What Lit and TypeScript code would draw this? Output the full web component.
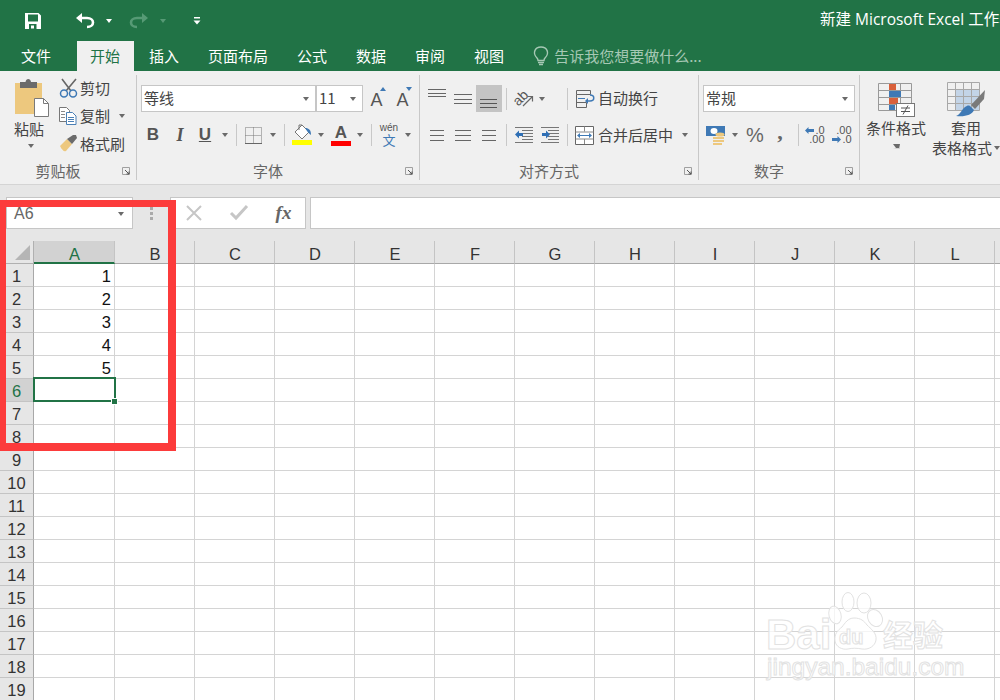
import { LitElement, html, css, svg } from "lit";
import { customElement } from "lit/decorators.js";

const ic = (x: number, y: number, w: number, h: number, c: unknown) =>
  html`<svg class="ic" viewBox="${x} ${y} ${w} ${h}" width=${w} height=${h}>${c}</svg>`;
const lines = (x1: number, x2: number, ys: number[], col = "#666") =>
  svg`${ys.map((y) => svg`<rect x=${x1} y=${y} width=${x2 - x1} height="1" fill=${col}></rect>`)}`;
const arr = html`<i class="arr"></i>`;
const sep = html`<i class="sep"></i>`;
const launcher = html`<span class="launch">${ic(0, 0, 8, 8, svg`<path d="M.5 .5h7v7h-7z" fill="none" stroke="#a0a0a0"/><path d="M3 3l4 4M7 4.5V7H4.5" fill="none" stroke="#555"/>`)}</span>`;
const decL = html`<svg class="da" viewBox="0 0 9 7" width="9" height="7"><path d="M0 3.500l3.500-3.500v2h5.500v3h-5.500v2z" fill="#3f79b5"></path></svg>`;
const decR = html`<svg class="da" viewBox="0 0 9 7" width="9" height="7"><path d="M9 3.500l-3.500-3.500v2h-5.500v3h5.500v2z" fill="#3f79b5"></path></svg>`;

const icons = {
  save: ic(25, 11, 16, 16, svg`<path fill-rule="evenodd" fill="#fff" d="M25 11h13.5l2.5 2.5V27H25zM28 12.5v7h10v-7zM29 22v5h7.500v-5z"/><rect x="31" y="23.500" width="3" height="3" fill="#fff"/>`),
  undo: ic(76, 11, 20, 17, svg`<path d="M79 17h9c8 0 8 9 0 9" fill="none" stroke="#fff" stroke-width="2.600"/><path d="M77 17l6-5v10z" fill="#fff"/>`),
  redo: ic(130, 11, 20, 17, svg`<path d="M147 17h-9c-8 0-8 9 0 9" fill="none" stroke="#569a75" stroke-width="2.600"/><path d="M149 17l-6-5v10z" fill="#569a75"/>`),
  cust: ic(193, 14, 8, 10, svg`<rect x="194" y="15" width="6" height="1.500" fill="#fff"/><path d="M193.500 18.500h7l-3.500 4z" fill="#fff"/>`),
  bulb: ic(533, 46, 16, 20, svg`<path d="M537 58c-5-5-2-11 4-11s9 6 4 11c-1 1-1 2-1 2.500h-6c0-.5 0-1.500-1-2.500z" fill="none" stroke="#a6c8b4" stroke-width="1.400"/><path d="M538 62.500h6M539 64.500h4" stroke="#a6c8b4" stroke-width="1.400"/>`),
  paste: ic(14, 78, 36, 40, svg`<rect x="15" y="83" width="27" height="31" fill="#edc87e"/><path d="M20 82h5.500c.5-4 5-4 5.500 0H37v6H20z" fill="#6b6b6b"/><path d="M34.500 98.500h9l5 5v13h-14z" fill="#fff" stroke="#7a7a7a"/><path d="M43.500 98.500v5h5" fill="none" stroke="#7a7a7a"/>`),
  cut: ic(57, 78, 20, 20, svg`<path d="M61 79l9 12M75 79l-10 12" stroke="#666" stroke-width="1.600" fill="none"/><circle cx="63" cy="93.500" r="3.500" fill="none" stroke="#3f79b5" stroke-width="1.500"/><circle cx="72" cy="93.500" r="3.500" fill="none" stroke="#3f79b5" stroke-width="1.500"/>`),
  copy: ic(57, 106, 20, 20, svg`<path d="M58.500 107.500h7l3 3v11h-10z" fill="#fff" stroke="#777"/><path d="M65.500 112.500h6l3.500 3.500v8.500h-9.500z" fill="#fff" stroke="#4a7fb5"/>${lines(60, 64, [111, 114, 117], "#888")}${lines(67, 73, [117, 119, 121], "#4a7fb5")}`),
  brush: ic(57, 134, 20, 20, svg`<path d="M59 146l7-7 5 5-6 7c-2 1-4-1-6-5z" fill="#edc87e"/><path d="M66 139l5 5 5-6-1-3h-3z" fill="#6b6b6b"/>`),
  border: ic(244, 125, 19, 19, svg`<path d="M245.500 126.500h16v16h-16zM245.500 134.500h16M253.500 126.500v16" fill="none" stroke="#777" stroke-dasharray="1 1"/><path d="M245 142.500h17" stroke="#666"/>`),
  fill: ic(291, 124, 22, 22, svg`<path d="M302 125l7 7-7 7-7-7z" fill="#fff" stroke="#777"/><path d="M299 130v-5h3" fill="none" stroke="#777"/><path d="M305 128c4 0 6 2 6 7-2-1-3-3-4-4z" fill="#3f79b5"/><rect x="292" y="140" width="20" height="5" fill="#ffff00"/>`),
  indentL: ic(514, 126, 20, 18, svg`${lines(522, 533, [130, 133, 136, 139], "#777")}${lines(515, 533, [127, 142], "#777")}<path d="M515 134.500l4-4v2.500h4v3h-4v2.500z" fill="#2f6fb5"/>`),
  indentR: ic(540, 126, 20, 18, svg`${lines(548, 559, [130, 133, 136, 139], "#777")}${lines(541, 559, [127, 142], "#777")}<path d="M550 134.500l-4-4v2.500h-4v3h4v2.500z" fill="#2f6fb5"/>`),
  orient: ic(514, 88, 22, 20, svg`<text x="516" y="102" transform="rotate(-45 522 100)" class="svgt">ab</text><path d="M524 105l9-9M528.500 95.500h5v5" fill="none" stroke="#666" stroke-width="1.200"/>`),
  wrap: ic(575, 88, 21, 20, svg`<path d="M576.500 89.500h14v4h-14zM576.500 93.500v13h10v-5h-10" fill="none" stroke="#666"/>${lines(578, 585, [97], "#3f79b5")}<path d="M590 94c5 0 5 6 0 6h-3" fill="none" stroke="#3f79b5" stroke-width="1.500"/><path d="M585 100l3-3v6z" fill="#3f79b5"/>`),
  merge: ic(574, 124, 21, 21, svg`<path d="M575.500 125.500h18v18h-18z" fill="#fff" stroke="#666"/><path d="M575.500 131h18M575.500 138h18M584.500 125.500v5M584.500 138v5" stroke="#888" fill="none"/><path d="M578 134.500h13" stroke="#3f79b5"/><path d="M577 134.500l3-2.500v5zM592 134.500l-3-2.500v5z" fill="#3f79b5"/>`),
  acct: ic(705, 125, 21, 21, svg`<rect x="706" y="126" width="19" height="10" fill="#3f79b5"/><ellipse cx="714" cy="131" rx="3.500" ry="3" fill="#fff"/><path d="M713 137h11v2h-11zM713 140h11v2h-11zM713 143h9v2h-9z" fill="#edc87e"/><ellipse cx="720" cy="134.500" rx="4.500" ry="2" fill="#edc87e"/>`),
  cond: ic(878, 82, 39, 36, svg`<path d="M879.500 83.500h33v27h-33zM890.500 83.500v27M901.500 83.500v27M879.500 90.500h33M879.500 97.500h33M879.500 104.500h33" fill="none" stroke="#999"/><rect x="890" y="84" width="7" height="6" fill="#d9603b"/><rect x="890" y="91" width="12" height="6" fill="#3f79b5"/><rect x="890" y="98" width="9" height="6" fill="#d9603b"/><rect x="890" y="105" width="6" height="5" fill="#3f79b5"/><rect x="897.500" y="103.500" width="18" height="13" fill="#fff" stroke="#777"/><path d="M902 108h9M902 111.500h9M909 105.500l-5 9" stroke="#555" fill="none"/>`),
  table: ic(948, 82, 40, 36, svg`<rect x="957" y="89" width="24" height="22" fill="#c3d4e7"/><path d="M949.500 82.500h32v28h-32zM957.500 82.500v28M965.500 82.500v28M973.500 82.500v28M949.500 89.500h32M949.500 96.500h32M949.500 103.500h32" fill="none" stroke="#a8a8a8"/><path d="M987 90l-14 15 4 4 9-10z" fill="#7a7a7a"/><path d="M972 106l4 4c-2 5-9 7-18 6 5-2 5-6 9-9 2-1 3-2 5-1z" fill="#3f79b5"/>`),
  x: ic(184, 205, 18, 16, svg`<path d="M186 206l14 14M200 206l-14 14" stroke="#c6c6c6" stroke-width="2" fill="none"/>`),
  check: ic(228, 205, 20, 16, svg`<path d="M230 213l5 5 11-12" stroke="#c6c6c6" stroke-width="3" fill="none"/>`),
  tri: ic(16, 245, 16, 16, svg`<path d="M31 245v15H16z" fill="#b5b5b5"/>`),
};

const rows = Array.from({ length: 19 }, (_, i) => i + 1);
const cols = "ABCDEFGHIJKLM".split("");

@customElement("app-root")
export class AppRoot extends LitElement {
  static styles = css`
    :host { display: block; width: 1000px; height: 700px; overflow: hidden; position: relative; background: #fff;
      font-family: "Noto Sans CJK SC", "Liberation Sans", sans-serif; font-size: 15px; color: #444; }
    .ic { display: block; overflow: visible; }
    .svgt { font: 14px "Liberation Sans", sans-serif; fill: #555; }
    i { display: block; font-style: normal; }
    .arr { width: 0; height: 0; border-left: 3.5px solid transparent; border-right: 3.5px solid transparent; border-top: 4px solid #6a6a6a; }
    .sep { width: 1px; height: 22px; background: #c8c8c8; }
    .cen { display: grid; grid-auto-flow: column; justify-content: start; align-items: center; justify-items: center; }

    .top { background: #217346; height: 71px; color: #fff; }
    .qat { height: 41px; grid-template-columns: 17px 32px 23px 26px 22px 38px 10px 19px 20px 613px 180px; white-space: nowrap; overflow: hidden; }
    .qat .arr { border-top-color: #fff; }
    .qat .arr.dim { border-top-color: #569a75; }
    .title { justify-self: start; font-family: "Open Sans", "Noto Sans CJK SC", sans-serif; font-size: 15.500px; line-height: 20px; margin-bottom: 4px; }
    .tabs { display: flex; height: 30px; line-height: 30px; padding-left: 21px; }
    .tab { padding: 0 14px 0 15px; }
    .tab.file { padding: 0 26px 0 0; }
    .tab.on { padding: 0 14px 0 13px; background: #f0f0f0; color: #217346; }
    .tell { display: flex; align-items: center; gap: 5px; margin-left: 15px; color: #a6c8b4; }

    .ribbon { display: flex; height: 114px; background: #f0f0f0; border-bottom: 1px solid #d4d4d4; box-sizing: border-box; overflow: hidden; }
    .group { box-sizing: border-box; height: 105px; margin-top: 4px; border-right: 1px solid #c8c8c8; display: flex; flex-direction: column; flex: none; }
    .g1 { width: 137px; } .g2 { width: 283px; } .g3 { width: 279px; } .g4 { width: 161px; }
    .g5 { width: 146px; border-right: 0; padding: 7px 0 0 6px; display: grid; grid-template-columns: 60px 80px; justify-items: center; align-content: start; }
    .body { flex: 1; min-height: 0; }
    .foot { height: 18px; display: flex; align-items: center; }
    .foot b { flex: 1; font-weight: 400; text-align: center; line-height: 18px; color: #666; }
    .launch { flex: none; width: 20px; display: grid; place-items: center; }

    .clip { display: grid; grid-template-columns: 58px 78px; }
    .pastecol { display: flex; flex-direction: column; padding: 3px 0 0 14px; }
    .pastecol span { line-height: 20px; margin-top: 1px; }
    .pastecol .arr { margin: 5px 0 0 14px; }
    .cliprows { display: grid; grid-auto-rows: 26px; row-gap: 2px; }
    .cliprow { display: flex; align-items: center; }
    .cliprow span { margin: -2px 0 0 2px; }
    .cliprow .arr { margin-left: 9px; }

    .r1 { height: 27px; margin-top: 10px; }
    .r2 { height: 26px; margin-top: 10px; }
    .box { height: 27px; box-sizing: border-box; background: #fff; border: 1px solid #c6c6c6; display: flex; align-items: center; justify-content: space-between; padding: 0 6px 0 2px; line-height: 24px; justify-self: stretch; }
    .box span { margin-top: -2px; }
    .fr1 { grid-template-columns: 3px 175px 47px 27px 25px; padding-left: 1px; }
    .fr2 { padding-left: 3px; grid-template-columns: 26px 28px 22px 18px 4px 30px 10px 12px 24px 14px 26px 12px 10px 26px 12px; }
    .fmt { font: 700 17px/20px "Liberation Sans", sans-serif; color: #555; }
    .fmt.it { font: italic 700 18px/20px "Liberation Serif", serif; }
    .fmt.un { text-decoration: underline; }
    .grow { position: relative; font: 18px/22px "Liberation Sans", sans-serif; color: #555; padding-top: 3px; }
    .grow::after { content: ""; position: absolute; right: -3px; top: 1px; border-left: 3px solid transparent; border-right: 3px solid transparent; }
    .grow.up::after { border-bottom: 4px solid #3f79b5; }
    .grow.dn::after { border-top: 4px solid #3f79b5; }
    .fcol { display: flex; flex-direction: column; align-items: center; width: 20px; font: 700 17px/17px "Liberation Sans", sans-serif; color: #555; }
    .fcol::after { content: ""; width: 20px; height: 5px; background: #ff0000; }
    .wen { display: flex; flex-direction: column; align-items: center; font: 10px/8px "Liberation Sans", sans-serif; color: #555; }
    .wen em { font: 13px/13px "Noto Sans CJK SC", sans-serif; color: #3f79b5; font-style: normal; margin-top: 1px; }

    .ar1 { padding-left: 4px; grid-template-columns: 26px 26px 26px 8px 28px 8px 16px 10px auto; margin-top: 10px; }
    .ar2 { padding-left: 4px; grid-template-columns: 26px 26px 26px 8px 28px 24px 10px auto; }
    .top-al { align-self: start; margin-top: 3px; }
    .activeb { width: 26px; height: 27px; background: #c4c4c4; display: flex; justify-content: center; align-items: flex-end; box-sizing: border-box; }
    .activeb .ic { margin-bottom: 4px; }
    .lbl { display: flex; align-items: center; padding-left: 3px; justify-self: start; white-space: nowrap; }
    .lbl span { margin: -2px 0 0 2px; }
    .lbl .arr { margin-left: 9px; }
    .lbl.mrg { padding-left: 2px; }
    .lbl.mrg span { margin-left: 3px; }

    .nr1 { padding-left: 4px; grid-template-columns: 152px; }
    .nr2 { padding-left: 4px; grid-template-columns: 24px 16px 24px 26px 10px 24px 30px; }
    .pct { font: 20px/22px "Liberation Sans", sans-serif; color: #666; }
    .comma { font: 700 22px/20px "Liberation Serif", serif; color: #666; margin-top: -6px; }
    .dec { display: flex; flex-direction: column; align-items: flex-end; font: 11px/9px "Liberation Sans", sans-serif; color: #555; white-space: nowrap; }
    .dec span { display: flex; align-items: center; gap: 1px; }
    .da { display: block; }

    .big { display: flex; flex-direction: column; align-items: center; white-space: nowrap; }
    .big span { line-height: 20px; }
    .big .arr.c { margin-top: 6px; }
    .big .l2 { display: flex; align-items: center; gap: 2px; }

    .fbar { height: 56px; background: #e6e6e6; padding-top: 12px; box-sizing: border-box; display: flex; align-items: flex-start; }
    .name { margin-left: 6px; width: 127px; height: 32px; box-sizing: border-box; background: #fff; border: 1px solid #c6c6c6; display: flex; align-items: center; justify-content: space-between; padding: 2px 8px 0 7px; font: 16px "Liberation Sans", sans-serif; color: #666; }
    .dots { width: 37px; height: 32px; display: flex; flex-direction: column; gap: 2px; align-items: center; justify-content: center; }
    .dots i { width: 3px; height: 3px; background: #aaa; }
    .ctl { width: 136px; height: 32px; box-sizing: border-box; background: #fff; border: 1px solid #c6c6c6; grid-template-columns: 45px 45px 45px; }
    .fx { font: italic 700 19px "Liberation Serif", serif; color: #666; }
    .input { margin-left: 4px; flex: 1; height: 32px; box-sizing: border-box; background: #fff; border: 1px solid #c6c6c6; border-right: 0; }

    .sheet { display: grid; grid-template-columns: 34px 81px repeat(12, 80px); grid-auto-rows: 23px; font: 16.500px/24px "Liberation Sans", sans-serif; }
    .corner, .ch, .rh { background: #e6e6e6; color: #333; display: flex; align-items: center; justify-content: center; box-sizing: border-box; }
    .corner { border-right: 1px solid #b0b0b0; border-bottom: 1px solid #b0b0b0; padding: 4px 2px 3px 16px; justify-content: flex-end; }
    .ch { border-right: 1px solid #c4c4c4; border-bottom: 1px solid #a8a8a8; padding: 4px 0 0 1px; }
    .ch.on { background: #d2d2d2; color: #217346; border-bottom: 2px solid #217346; }
    .rh { border-right: 1px solid #a8a8a8; border-bottom: 1px solid #c4c4c4; padding-top: 1px; }
    .rh.on { background: #d2d2d2; color: #217346; }
    .c { box-sizing: border-box; border-right: 1px solid #d4d4d4; border-bottom: 1px solid #d4d4d4; text-align: right; padding-right: 3px; color: #111; }
    .selwrap { position: relative; }
    .selbox { position: absolute; left: -1px; top: -2px; right: -2px; bottom: -1px; border: 2px solid #217346; z-index: 2; }
    .handle { position: absolute; right: -3px; bottom: -4px; width: 5px; height: 5px; background: #217346; outline: 1px solid #fff; }

    .redbox { position: absolute; left: 0; top: 200px; width: 176px; height: 251px; box-sizing: border-box; border: solid #fc3b3b; border-width: 7px 8px 8px 6px; z-index: 5; }

    .wm { position: absolute; left: 762px; top: 590px; width: 190px; height: 92px; z-index: 4; pointer-events: none; }
    .wm svg { position: absolute; left: 0; top: 0; overflow: visible; }
    .wm span { position: absolute; color: rgba(255,255,255,.75); -webkit-text-stroke: 1px #e2e2e2; white-space: nowrap; line-height: 1; }
    .wm .bai { left: 4px; top: 24px; font: 700 42px/1 "Liberation Sans", sans-serif; }
    .wm .du { left: 77px; top: 37px; font: 700 20px/1 "Liberation Sans", sans-serif; }
    .wm .jy { left: 121px; top: 28px; font: 700 30px/1 "Noto Sans CJK SC", sans-serif; }
    .wm .url { left: 5px; top: 65px; font: 24.500px/1 "Liberation Sans", sans-serif; }
  `;

  render() {
    return html`
      <div class="top">
        <div class="qat cen">
          <i></i>${icons.save}<i></i>${icons.undo}${arr}${icons.redo}<i class="arr dim"></i><i></i>${icons.cust}<i></i>
          <div class="title">新建 Microsoft Excel 工作表</div>
        </div>
        <div class="tabs">
          <div class="tab file">文件</div>
          <div class="tab on">开始</div>
          <div class="tab">插入</div>
          <div class="tab">页面布局</div>
          <div class="tab">公式</div>
          <div class="tab">数据</div>
          <div class="tab">审阅</div>
          <div class="tab">视图</div>
          <div class="tell">${icons.bulb}<span>告诉我您想要做什么...</span></div>
        </div>
      </div>

      <div class="ribbon">
        <section class="group g1">
          <div class="body clip">
            <div class="pastecol">${icons.paste}<span>粘贴</span>${arr}</div>
            <div class="cliprows">
              <div class="cliprow">${icons.cut}<span>剪切</span></div>
              <div class="cliprow">${icons.copy}<span>复制</span>${arr}</div>
              <div class="cliprow">${icons.brush}<span>格式刷</span></div>
            </div>
          </div>
          <div class="foot"><b>剪贴板</b>${launcher}</div>
        </section>

        <section class="group g2">
          <div class="body">
            <div class="cen r1 fr1">
              <i></i>
              <div class="box"><span>等线</span>${arr}</div>
              <div class="box"><span>11</span>${arr}</div>
              <div class="grow up">A</div>
              <div class="grow dn">A</div>
            </div>
            <div class="cen r2 fr2">
              <div class="fmt">B</div><div class="fmt it">I</div><div class="fmt un">U</div>${arr}${sep}
              ${icons.border}${arr}${sep}
              ${icons.fill}${arr}
              <div class="fcol">A</div>${arr}${sep}
              <div class="wen"><span>wén</span><em>文</em></div>${arr}
            </div>
          </div>
          <div class="foot"><b>字体</b>${launcher}</div>
        </section>

        <section class="group g3">
          <div class="body">
            <div class="cen r1 ar1">
              <div class="top-al">${ic(427, 88, 20, 10, lines(428, 446, [89, 93, 96]))}</div>
              ${ic(453, 92, 20, 12, lines(454, 472, [93, 98, 102]))}
              <div class="activeb">${ic(480, 97, 20, 10, lines(481, 498, [98, 102, 106], "#555"))}</div>
              ${sep}${icons.orient}${arr}<i></i>${sep}
              <div class="lbl">${icons.wrap}<span>自动换行</span></div>
            </div>
            <div class="cen r2 ar2">
              ${ic(429, 128, 16, 12, lines(430, 444, [129, 134, 139]))}
              ${ic(454, 128, 18, 12, lines(455, 471, [129, 134, 139]))}
              ${ic(481, 128, 16, 12, lines(482, 496, [129, 134, 139]))}
              ${sep}${icons.indentL}${icons.indentR}${sep}
              <div class="lbl mrg">${icons.merge}<span>合并后居中</span>${arr}</div>
            </div>
          </div>
          <div class="foot"><b>对齐方式</b>${launcher}</div>
        </section>

        <section class="group g4">
          <div class="body">
            <div class="cen r1 nr1"><div class="box"><span>常规</span>${arr}</div></div>
            <div class="cen r2 nr2">
              ${icons.acct}${arr}
              <div class="pct">%</div><div class="comma">,</div>${sep}
              <div class="dec"><span>${decL}.0</span><span>.00</span></div>
              <div class="dec"><span>.00</span><span>${decR}.0</span></div>
            </div>
          </div>
          <div class="foot"><b>数字</b>${launcher}</div>
        </section>

        <section class="group g5">
          <div class="big">${icons.cond}<span>条件格式</span><i class="arr c"></i></div>
          <div class="big">${icons.table}<span>套用</span><span class="l2">表格格式${arr}</span></div>
        </section>
      </div>

      <div class="fbar">
        <div class="name"><span>A6</span>${arr}</div>
        <div class="dots"><i></i><i></i><i></i></div>
        <div class="ctl cen">${icons.x}${icons.check}<div class="fx">fx</div></div>
        <div class="input"></div>
      </div>

      <div class="sheet">
        <div class="corner">${icons.tri}</div>
        ${cols.map((c) => html`<div class="ch ${c === "A" ? "on" : ""}">${c}</div>`)}
        ${rows.map(
          (r) => html`
            <div class="rh ${r === 6 ? "on" : ""}">${r}</div>
            ${cols.map((c) =>
              c === "A" && r === 6
                ? html`<div class="c selwrap"><div class="selbox"><div class="handle"></div></div></div>`
                : html`<div class="c">${c === "A" && r <= 5 ? r : ""}</div>`,
            )}
          `,
        )}
      </div>

      <div class="redbox"></div>

      <div class="wm">
        <svg viewBox="762 590 190 92" width="190" height="92">
          <g fill="rgba(255,255,255,.75)" stroke="#e2e2e2">
            <ellipse cx="835" cy="615" rx="6" ry="9" transform="rotate(-15 835 615)"></ellipse>
            <ellipse cx="848" cy="602" rx="6" ry="9.500"></ellipse>
            <ellipse cx="864" cy="603" rx="7" ry="10"></ellipse>
            <ellipse cx="875" cy="618" rx="7" ry="9" transform="rotate(-30 875 618)"></ellipse>
            <path d="M854 618c-6 0-9 5-12 9-4 3-8 7-7 14 1 6 7 9 13 8 4-1 9-1 14 0 7 1 13-3 14-9 1-7-5-11-9-15-3-4-6-7-13-7z"></path>
          </g>
        </svg>
        <span class="bai">Bai</span><span class="du">du</span><span class="jy">经验</span><span class="url">jingyan.baidu.com</span>
      </div>
    `;
  }
}
